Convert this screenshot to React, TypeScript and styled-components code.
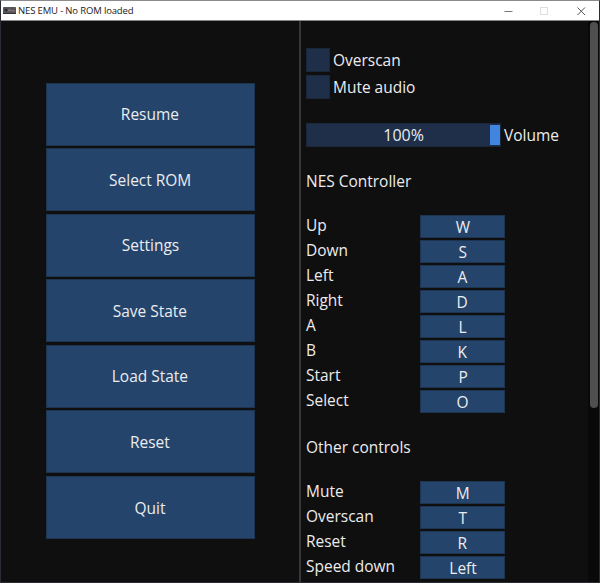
import React from "react";
import styled, { createGlobalStyle } from "styled-components";

const Global = createGlobalStyle`
  * { box-sizing: border-box; }
  body { margin: 0; overflow: hidden; background: #0f0f0f; }
`;

const Window = styled.div`
  width: 600px;
  height: 583px;
  display: flex;
  flex-direction: column;
  overflow: hidden;
  border: 1px solid #2a2b33;
  border-top-color: #8b8b8b;
  background: #0f0f0f;
  color: #ececee;
  font: 450 17px/20px "Open Sans", "Noto Sans", sans-serif;
  white-space: nowrap;
`;

const TitleBar = styled.header`
  flex: none;
  height: 20px;
  display: flex;
  align-items: center;
  padding-left: 2px;
  background: #fff;
  border-bottom: 1px solid #85868a;
  color: #222;
`;

const Title = styled.span`
  flex: 1;
  margin-left: 2px;
  font: 9.5px/18px "Open Sans", sans-serif;
  letter-spacing: -0.15px;
`;

const Controls = styled.svg`
  display: block;
  width: 96px;
  height: 18px;
`;

const Body = styled.div`
  flex: 1;
  min-height: 0;
  display: flex;
`;

const Text = styled.span<{ $origin?: "left" | "center"; $scale?: number }>`
  display: inline-block;
  justify-self: start;
  transform: translateY(0.4px) scaleX(${(p) => p.$scale ?? 0.91});
  transform-origin: ${(p) => p.$origin ?? "left"} center;
`;

const Menu = styled.nav`
  width: 298px;
  flex: none;
  display: flex;
  flex-direction: column;
  gap: 2.6px;
  padding: 61.5px 0 0 44.5px;
`;

const Button = styled.button`
  display: flex;
  align-items: center;
  justify-content: center;
  flex: none;
  padding: 0;
  border: 1px solid #1d3550;
  background: #24446c;
  color: inherit;
  font: inherit;
`;

const MenuButton = styled(Button)`
  width: 209.5px;
  height: 63px;
`;

const Settings = styled.main`
  flex: 1;
  min-width: 0;
  border-left: 2px solid #36363c;
  padding: 27px 0 0 5.4px;
`;

const CheckRow = styled.label`
  display: flex;
  align-items: center;
  height: 24px;
  margin-bottom: 2.5px;
  gap: 3px;
`;

const CheckBox = styled.span`
  width: 24px;
  height: 24px;
  background: #1f2f49;
  border: 1px solid #1a273b;
`;

const VolumeRow = styled.div`
  display: flex;
  align-items: center;
  gap: 3px;
  margin-top: 24px;
  height: 24px;
`;

const Slider = styled.div`
  position: relative;
  width: 195px;
  height: 24px;
  background: #1f2f49;
  border: 1px solid #1a273b;
  text-align: center;
  line-height: 22px;
`;

const Thumb = styled.span`
  position: absolute;
  right: 0;
  top: 1px;
  width: 10px;
  height: 20px;
  background: #4086e0;
`;

const Heading = styled.h2<{ $top: number }>`
  margin: ${(p) => p.$top}px 0 23.5px;
  height: 20px;
  font: inherit;
`;

const Binding = styled.div`
  display: grid;
  grid-template-columns: 113.5px 85.5px;
  height: 25px;
`;

const KeyButton = styled(Button)`
  height: 23px;
  padding-top: 1.5px;
`;

const Track = styled.aside`
  width: 11px;
  flex: none;
  background: #090909;
  padding: 1px 1px 0 2px;
`;

const Grip = styled.div`
  width: 8px;
  height: 386px;
  border-radius: 4px;
  background: #4f4f4f;
`;

const menu = ["Resume", "Select ROM", "Settings", "Save State", "Load State", "Reset", "Quit"];
const pad = [["Up", "W"], ["Down", "S"], ["Left", "A"], ["Right", "D"], ["A", "L"], ["B", "K"], ["Start", "P"], ["Select", "O"]];
const other = [["Mute", "M"], ["Overscan", "T"], ["Reset", "R"], ["Speed down", "Left"]];

const Bindings = ({ items }: { items: string[][] }) => (
  <>
    {items.map(([label, key]) => (
      <Binding key={label}>
        <Text>{label}</Text>
        <KeyButton><Text $origin="center">{key}</Text></KeyButton>
      </Binding>
    ))}
  </>
);

export default function App() {
  return (
    <>
      <Global />
      <Window>
        <TitleBar>
          <svg width="13" height="7" viewBox="0 0 13 7">
            <rect width="13" height="7" rx="0.6" fill="#55555a" />
            <path d="M0 6h13v1H0z" fill="#303035" />
            <path d="M1.5 3h3M3 1.7v2.8" stroke="#222226" />
            <path d="M5 3.2h3" stroke="#8d8d92" />
            <path d="M8.5 3.8h3" stroke="#b77479" />
          </svg>
          <Title>NES EMU - No ROM loaded</Title>
          <Controls viewBox="0 0 96 18" fill="none">
            <path d="M1.5 9.5h8" stroke="#777" />
            <path d="M37.5 5.5h7v7h-7z" stroke="#ddd" />
            <path d="M74.5 5.5l7.5 7.5M82 5.5L74.5 13" stroke="#555" />
          </Controls>
        </TitleBar>
        <Body>
          <Menu>
            {menu.map((m) => (
              <MenuButton key={m}><Text $origin="center">{m}</Text></MenuButton>
            ))}
          </Menu>
          <Settings>
            <CheckRow><CheckBox /><Text>Overscan</Text></CheckRow>
            <CheckRow><CheckBox /><Text>Mute audio</Text></CheckRow>
            <VolumeRow>
              <Slider><Text $origin="center" $scale={0.94}>100%</Text><Thumb /></Slider>
              <Text>Volume</Text>
            </VolumeRow>
            <Heading $top={24.5}><Text>NES Controller</Text></Heading>
            <Bindings items={pad} />
            <Heading $top={22.5}><Text>Other controls</Text></Heading>
            <Bindings items={other} />
          </Settings>
          <Track><Grip /></Track>
        </Body>
      </Window>
    </>
  );
}
